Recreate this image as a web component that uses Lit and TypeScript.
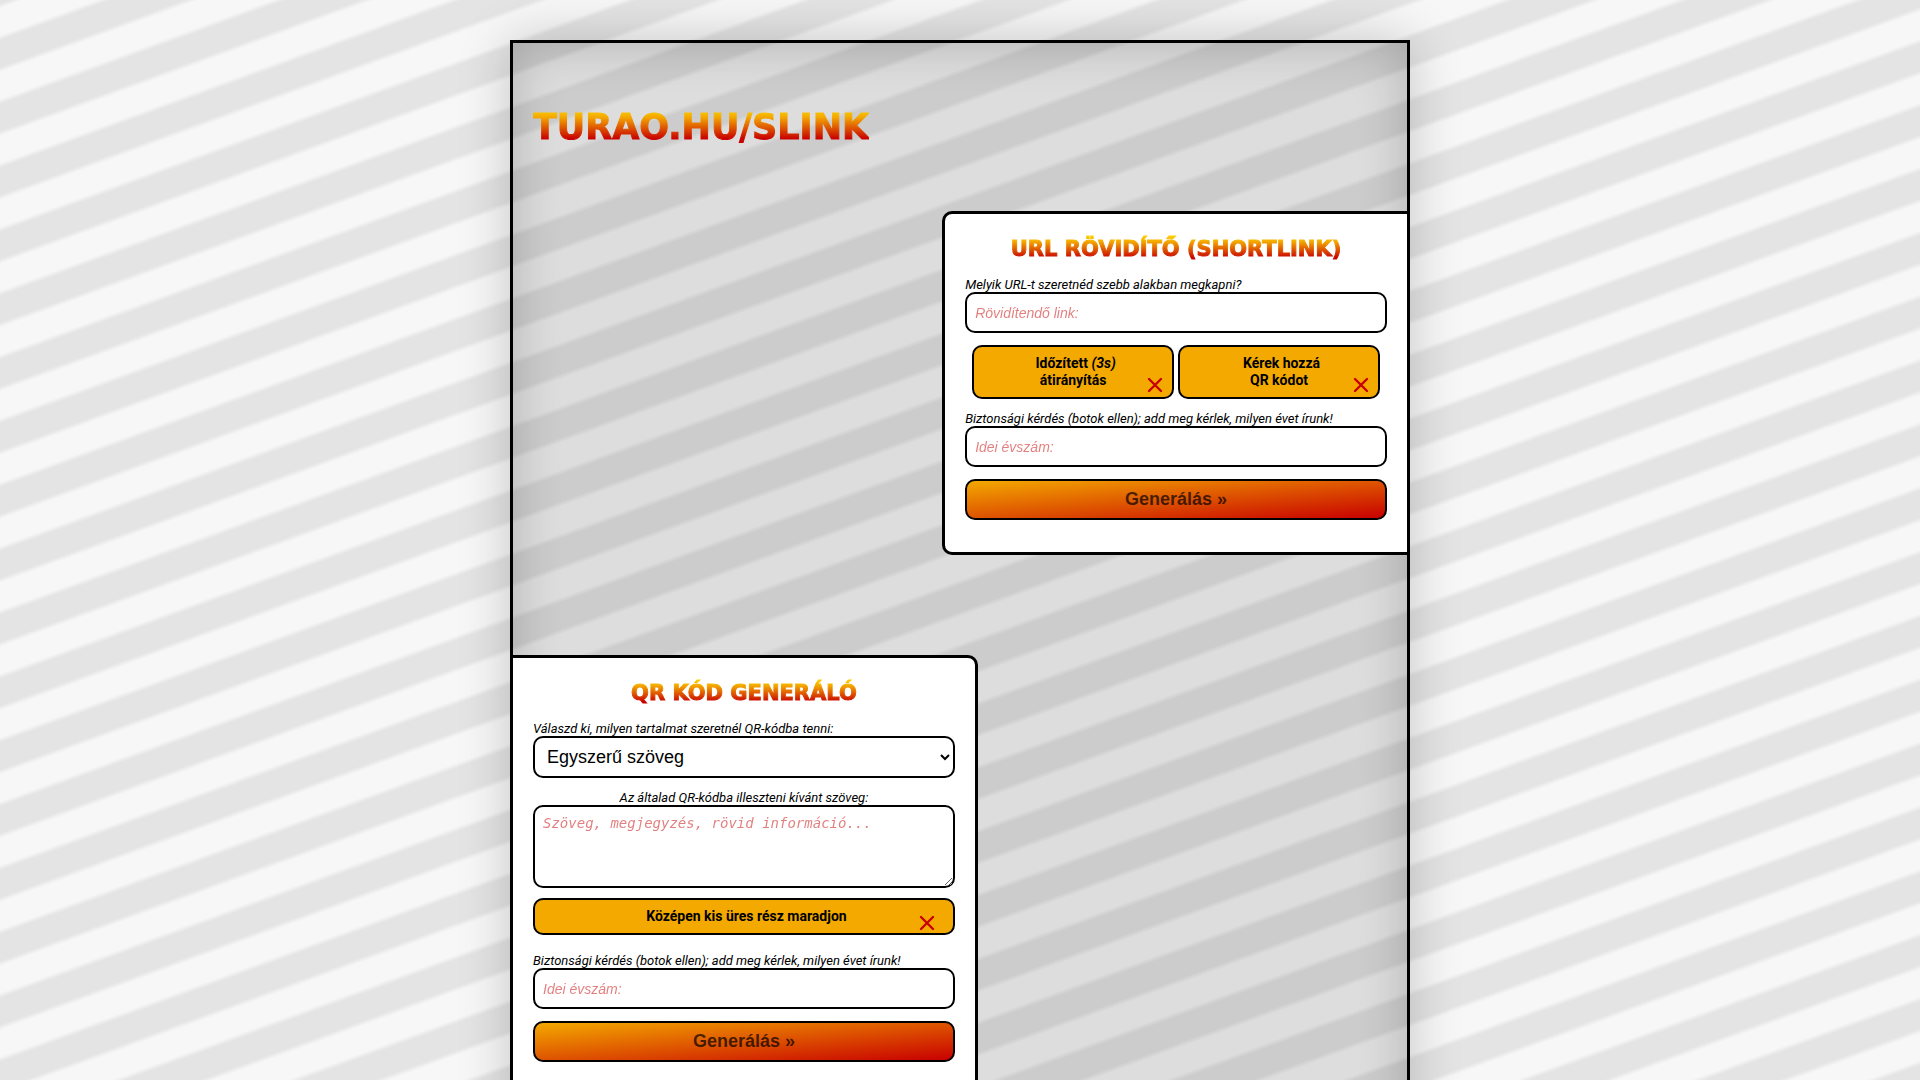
import { LitElement, html, css, svg } from "lit";
import { customElement, state } from "lit/decorators.js";

const cross = () => html`<svg class="cross" viewBox="0 0 16 16" aria-hidden="true">
  ${svg`<path d="M2 2 L14 14 M14 2 L2 14" fill="none" stroke="#c80000" stroke-width="2.4" stroke-linecap="round" />`}
</svg>`;

@customElement("app-root")
export class AppRoot extends LitElement {
  @state() private kind = "text";

  static styles = css`
    :host {
      display: flow-root;
      min-height: 100vh;
      font-family: Roboto, "Liberation Sans", sans-serif;
      color: #000;
      background: repeating-linear-gradient(
        160deg,
        #e4e4e4 0 3px,
        #f7f7f7 8px 33px,
        #e4e4e4 38px 60px
      );
    }
    *, *::before, *::after { box-sizing: border-box; }
    .page {
      max-width: 900px;
      margin: 40px auto;
      padding-bottom: 100px;
      border: 3px solid #000;
      background: rgba(0, 0, 0, 0.1);
      box-shadow: 0 0 50px rgba(0, 0, 0, 0.2), inset 0 0 50px rgba(0, 0, 0, 0.2);
      display: flex;
      flex-direction: column;
    }
    h1, h2 {
      margin: 0;
      font-family: "DejaVu Sans", sans-serif;
      font-weight: 700;
      width: fit-content;
      color: transparent;
      -webkit-text-stroke: 1px transparent;
      background: linear-gradient(#ffdc00, #f4a900 25%, #c80000 80%);
      -webkit-background-clip: text;
      background-clip: text;
    }
    h1 {
      font-size: 35px;
      line-height: 40px;
      margin: 64px 20px;
    }
    h2 {
      font-size: 21px;
      line-height: 30px;
      margin: 0 auto 13px;
    }
    .card {
      width: 52%;
      background: #fff;
      border: 3px solid #000;
      padding: 20px 20px 32px;
    }
    .card.right {
      align-self: flex-end;
      border-right: 0;
      border-radius: 10px 0 0 10px;
    }
    .card.left {
      margin-top: 100px;
      border-left: 0;
      border-radius: 0 10px 10px 0;
    }
    form { display: flex; flex-direction: column; }
    .caption {
      font-size: 13px;
      line-height: 15px;
      font-style: italic;
    }
    .caption.centered { text-align: center; }
    .field {
      display: block;
      width: 100%;
      margin: 0 0 12px;
      border: 2px solid #000;
      border-radius: 10px;
      background: #fff;
      color: #000;
      font-family: "Liberation Sans", Arial, sans-serif;
      font-size: 14px;
      height: 41px;
      padding: 0 8px;
    }
    .field::placeholder { color: #c80000; opacity: 0.5; font-style: italic; }
    select.field { font-size: 18px; height: 42px; }
    textarea.field {
      height: 83px;
      padding: 8px;
      font-family: "DejaVu Sans Mono", monospace;
      font-size: 14px;
      margin-bottom: 10px;
    }
    .options {
      display: flex;
      gap: 4px;
      padding: 0 7px;
      margin-bottom: 12px;
    }
    .option {
      flex: 1;
      position: relative;
      display: block;
      padding: 8px 16px;
      border: 2px solid #000;
      border-radius: 10px;
      background: #f4a900;
      font-size: 14px;
      line-height: 17px;
      font-weight: 700;
      text-align: center;
      cursor: pointer;
    }
    .option.wide { margin-bottom: 18px; }
    .option input {
      appearance: none;
      width: 5px;
      height: 5px;
      margin: 0;
      opacity: 0;
    }
    .cross {
      position: absolute;
      right: 9px;
      bottom: 4px;
      width: 16px;
      height: 16px;
    }
    .wide .cross { right: 18px; bottom: 2px; }
    .option input:checked ~ .cross { visibility: hidden; }
    .send {
      height: 41px;
      border: 2px solid #000;
      border-radius: 10px;
      background: linear-gradient(to bottom right, #f4a900, #c80000);
      color: rgba(0, 0, 0, 0.7);
      font-family: "Liberation Sans", Arial, sans-serif;
      font-size: 18px;
      font-weight: 700;
    }
    @media (max-width: 700px) {
      .card { width: 94%; }
      .options { flex-direction: column; }
    }
  `;

  render() {
    return html`
      <main class="page">
        <h1>TURAO.HU/SLINK</h1>

        <section class="card right">
          <form>
            <h2>URL RÖVIDÍTŐ (SHORTLINK)</h2>
            <label class="caption" for="url">Melyik URL-t szeretnéd szebb alakban megkapni?</label>
            <input class="field" id="url" type="text" placeholder="Rövidítendő link:" />
            <div class="options">
              <label class="option"><input type="checkbox" />Időzített <em>(3s)</em><br />átirányítás${cross()}</label>
              <label class="option"><input type="checkbox" />Kérek hozzá<br />QR kódot${cross()}</label>
            </div>
            <label class="caption" for="year-url">Biztonsági kérdés (botok ellen); add meg kérlek, milyen évet írunk!</label>
            <input class="field" id="year-url" type="text" placeholder="Idei évszám:" />
            <button class="send" type="button">Generálás »</button>
          </form>
        </section>

        <section class="card left">
          <form>
            <h2>QR KÓD GENERÁLÓ</h2>
            <label class="caption" for="kind">Válaszd ki, milyen tartalmat szeretnél QR-kódba tenni:</label>
            <select
              class="field"
              id="kind"
              .value=${this.kind}
              @change=${(e: Event) => (this.kind = (e.target as HTMLSelectElement).value)}
            >
              <option value="text">Egyszerű szöveg</option>
            </select>
            <label class="caption centered" for="content">Az általad QR-kódba illeszteni kívánt szöveg:</label>
            <textarea class="field" id="content" placeholder="Szöveg, megjegyzés, rövid információ..."></textarea>
            <label class="option wide"><input type="checkbox" />Középen kis üres rész maradjon${cross()}</label>
            <label class="caption" for="year-qr">Biztonsági kérdés (botok ellen); add meg kérlek, milyen évet írunk!</label>
            <input class="field" id="year-qr" type="text" placeholder="Idei évszám:" />
            <button class="send" type="button">Generálás »</button>
          </form>
        </section>
      </main>
    `;
  }
}
